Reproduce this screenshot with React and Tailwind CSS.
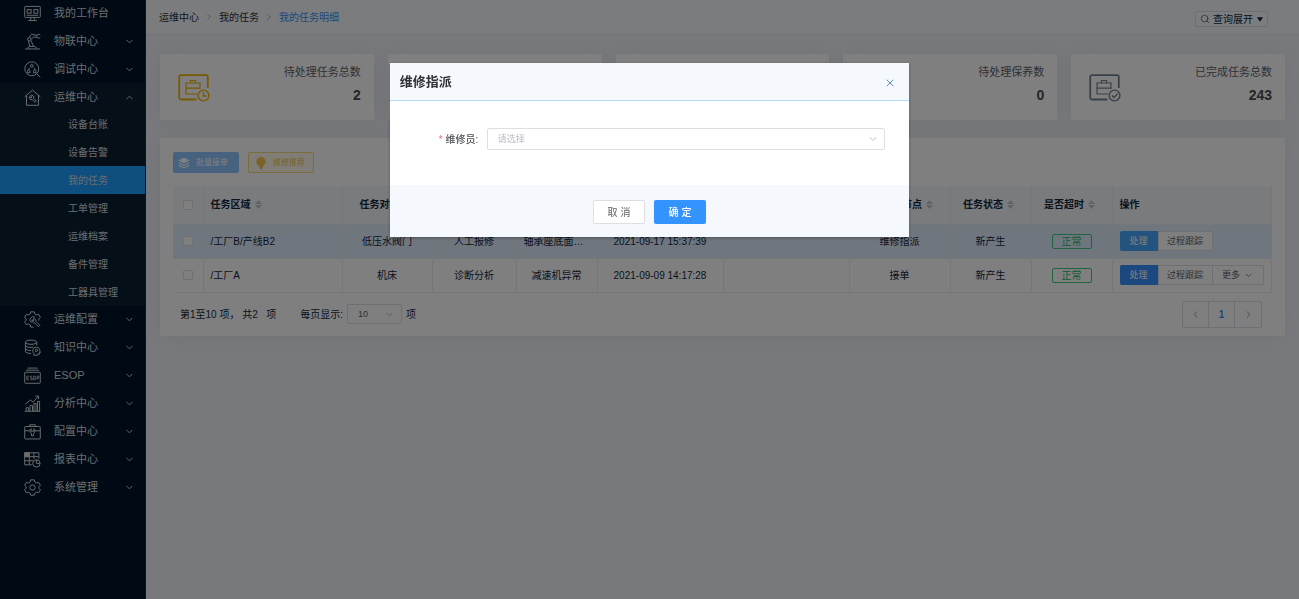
import { ChevronDown, ChevronLeft, ChevronRight, ChevronUp, Search, X } from 'lucide-react';

// 侧边栏图标，统一 24x24 线框
const ICONS = {
  desk: (
    <>
      <rect x="1" y="2" width="22" height="15.5" rx="1" />
      <rect x="4.5" y="6.5" width="5.5" height="5" />
      <rect x="14" y="6.5" width="5.5" height="5" />
      <path d="M4 14.5h16M9.5 17.5v4M14.5 17.5v4M6 22h12" />
    </>
  ),
  robot: (
    <>
      <path d="M1.500 22.500h21M5.500 22c0-2 1-3 3-3h6c2 0 3 1 3 3M8 19 6.500 11M13.500 19 9.800 10.500" />
      <circle cx="7.500" cy="8.800" r="2.300" />
      <path d="M6.500 6.600 11 1.800 18 3.200M10 9.200l3.500-3.700 4.500.8" />
      <path d="M23 2.500c-2-1.500-5-.5-5 2s3 3.500 5 2" />
    </>
  ),
  debug: (
    <>
      <circle cx="11" cy="11" r="9.800" />
      <path d="m18 18 5 5" />
      <circle cx="11" cy="6.800" r="1.900" />
      <path d="M8 9.500 6 13M14 9.500l2 3.500M5 16.500v-2a1.800 1.800 0 0 1 3.600 0v2zM13.400 16.500v-2a1.800 1.800 0 0 1 3.600 0v2z" />
    </>
  ),
  house: (
    <>
      <path d="M1 11 12 1.500 23 11M3.500 9v14h17V9" />
      <path d="M9.200 9.200a3 3 0 0 1 4.300 3.800l4 4-1.800 1.800-4-4a3 3 0 0 1-3.900-4.100l2.200 1.800 1.200-1.300z" />
    </>
  ),
  gearTool: (
    <>
      <path d="M13.500 22.800h-4l-.8-3-2.400-1.400-3 .9L.9 15.200 3 13v-2L.9 8.900l2.400-4.200 3 .9 2.400-1.400.8-3h5l.8 3 2.400 1.400 3-.9 2.400 4.200L21 11v2.500" />
      <path d="M15.500 8.800A4.500 4.500 0 1 0 10.500 16.300" />
      <path d="M13 11a2.800 2.800 0 0 1 3.600 3.400l5.800 5.800-2 2-5.800-5.800a2.800 2.800 0 0 1-3.300-3.600l2.100 1.200z" />
    </>
  ),
  database: (
    <>
      <ellipse cx="10" cy="4.500" rx="8" ry="3" />
      <path d="M2 4.500v13c0 1.700 3.500 3 8 3M18 4.500V9M2 9c0 1.700 3.500 3 8 3 1.500 0 2.500 0 3.500-.4M2 13.300c0 1.700 3.500 3 8 3" />
      <path d="M14 23v-2.500c-3-3-2-9 3.500-9 3.500 0 5 2.200 4.700 5l1 2.500h-1.500v2.500H19V23z" />
      <circle cx="17.500" cy="16" r="1.700" />
    </>
  ),
  esop: (
    <>
      <path d="M5 1.500h14M3 4.500h18" />
      <rect x="1" y="7.500" width="22" height="15.500" rx="1" />
      <path d="M7 13H4v5h3M4 15.500h2.500M11.500 13H9v2.500h2.500V18H9M13.500 13H16v5h-2.500zM18.500 18v-5H21v2.800h-2.500" strokeWidth="1.100" />
    </>
  ),
  chart: (
    <>
      <path d="M1 23h22M3 23v-5h3.500v5M8.500 23v-8H12v8M14 23V12h3v11M19 23V9h3v14" />
      <path d="m2 13 7-6 4 3 7-8M16 1.500h4.500V6" />
    </>
  ),
  box: (
    <>
      <rect x="1" y="5" width="22" height="17.500" rx="1" />
      <path d="M8 5V2.500h8V5M1 11h7.500M15.500 11H23" />
      <path d="M10.500 18v-3.500a3.800 3.800 0 0 1-.5-6.500v3.500h4V8a3.800 3.800 0 0 1-.5 6.500V18z" />
    </>
  ),
  report: (
    <>
      <path d="M11 19.500H1V2.500h20V11M1 8h20M1 13.700h12M7.500 2.500v17M14 2.500V11" />
      <path d="M1 2.500h6.500V8H1z" fill="currentColor" />
      <circle cx="17.500" cy="17.500" r="5.200" />
      <path d="M17.500 12.500v5h5" />
    </>
  ),
  gear: (
    <>
      <path d="M9.500 1.200h5l.8 3 2.400 1.400 3-.9 2.400 4.200L21 11v2l2.100 2.200-2.400 4.200-3-.9-2.400 1.400-.8 3h-5l-.8-3-2.400-1.400-3 .9L.9 15.200 3 13v-2L.9 8.900l2.400-4.200 3 .9 2.400-1.400z" />
      <circle cx="12" cy="12" r="3.800" />
    </>
  ),
};

const MENU = [
  { label: '我的工作台', icon: 'desk', leaf: true },
  { label: '物联中心', icon: 'robot' },
  { label: '调试中心', icon: 'debug' },
  {
    label: '运维中心',
    icon: 'house',
    children: ['设备台账', '设备告警', '我的任务', '工单管理', '运维档案', '备件管理', '工器具管理'],
  },
  { label: '运维配置', icon: 'gearTool' },
  { label: '知识中心', icon: 'database' },
  { label: 'ESOP', icon: 'esop' },
  { label: '分析中心', icon: 'chart' },
  { label: '配置中心', icon: 'box' },
  { label: '报表中心', icon: 'report' },
  { label: '系统管理', icon: 'gear' },
];

const ACTIVE_MENU = '我的任务';

const STATS = [
  { label: '待处理任务总数', value: 2, color: 'text-[#f0b400]', done: false },
  { label: '待处理维修数', value: 2, color: 'text-[#409eff]', done: false },
  { label: '待处理巡检数', value: 0, color: 'text-[#13ce66]', done: false },
  { label: '待处理保养数', value: 0, color: 'text-[#f56c6c]', done: false },
  { label: '已完成任务总数', value: 243, color: 'text-[#708396]', done: true },
];

const COLUMNS = [
  { label: '任务对象', width: 'w-[90px]' },
  { label: '任务来源', width: 'w-[84px]' },
  { label: '任务描述', width: 'w-[81px]' },
  { label: '创建时间', width: 'w-[126px]' },
  { label: '完成时间', width: 'w-[126px]' },
  { label: '任务当前节点', width: 'w-[101px]' },
  { label: '任务状态', width: 'w-[81px]' },
  { label: '是否超时', width: 'w-[81px]' },
];

const ROWS = [
  {
    area: '/工厂B/产线B2',
    cells: ['低压水阀门', '人工报修', '轴承座底面磨损', '2021-09-17 15:37:39', '', '维修指派', '新产生'],
    hover: true,
    more: false,
  },
  {
    area: '/工厂A',
    cells: ['机床', '诊断分析', '减速机异常', '2021-09-09 14:17:28', '', '接单', '新产生'],
    hover: false,
    more: true,
  },
];

function MenuIcon({ name }) {
  return (
    <svg viewBox="0 0 24 24" className="size-[17px] shrink-0" fill="none" stroke="currentColor" strokeWidth="1.4" aria-hidden="true">
      {ICONS[name]}
    </svg>
  );
}

function SortIcon() {
  return (
    <svg viewBox="0 0 8 10" className="h-[9px] w-[7px] shrink-0 text-[#c0c4cc]" fill="currentColor" aria-hidden="true">
      <path d="M4 0 8 4.300H0zM4 10 0 5.700h8z" />
    </svg>
  );
}

function StatIcon({ done, color }) {
  return (
    <svg viewBox="0 0 32 28" className={`h-7 w-8 shrink-0 ${color}`} fill="none" stroke="currentColor" aria-hidden="true">
      <path d="M18.500 25.500H3A1.800 1.800 0 0 1 1.200 23.700V3A1.800 1.800 0 0 1 3 1.200h25A1.800 1.800 0 0 1 29.800 3v11" strokeWidth="1.800" />
      <path d="M19 20H8V9h14v6M8 14.200h14M12.500 9V6.500h5V9" strokeWidth="1.200" />
      <circle cx="25.500" cy="21.500" r="5.400" strokeWidth="1.400" />
      {done ? <path d="m23 21.500 2 2 3.500-3.800" strokeWidth="1.400" /> : <path d="M25.500 18v4h3" strokeWidth="1.400" />}
    </svg>
  );
}

function Sidebar() {
  return (
    <aside className="w-[146px] shrink-0 border-r border-[#16293b] bg-[#001529] text-[#d5d9dd]">
      <nav className="-mt-px">
        {MENU.map(({ label, icon, leaf, children }) => (
          <div key={label} className={children ? 'bg-[#0a1f31]' : ''}>
            <button type="button" className="flex h-7 w-full items-center pr-[10px] pl-6 text-[11px]">
              <MenuIcon name={icon} />
              <span className="ml-[13px] flex-1 text-left">{label}</span>
              {!leaf && (children ? <ChevronUp className="size-[11px]" /> : <ChevronDown className="size-[11px]" />)}
            </button>
            {children && (
              <ul className="-my-px">
                {children.map((child) => (
                  <li key={child}>
                    <a
                      href="#"
                      className={`flex h-7 items-center pl-[68px] text-[10px] ${child === ACTIVE_MENU ? 'bg-[#1f9fff]' : ''}`}
                    >
                      {child}
                    </a>
                  </li>
                ))}
              </ul>
            )}
          </div>
        ))}
      </nav>
    </aside>
  );
}

function TopBar() {
  return (
    <header className="flex h-[35px] items-center justify-between border-b border-[#e6e9ee] bg-[#f6f8fb] pr-[31px] pl-[13px]">
      <nav className="flex items-center gap-[5px] text-[10px] text-[#303133]">
        <a href="#">运维中心</a>
        <ChevronRight className="size-[10px] text-[#a0a4aa]" />
        <a href="#">我的任务</a>
        <ChevronRight className="size-[10px] text-[#a0a4aa]" />
        <a href="#" className="text-[#3490ff]">我的任务明细</a>
      </nav>
      <button type="button" className="mt-1 flex h-4 items-center gap-[3px] rounded-xs border border-[#dcdfe6] bg-white/40 px-1 text-[10px] text-[#12263c]">
        <Search className="size-[10px] text-[#606266]" />
        查询展开
        <svg viewBox="0 0 8 6" className="ml-px h-[5px] w-[6px]" fill="currentColor" aria-hidden="true">
          <path d="M0 0h8L4 6z" />
        </svg>
      </button>
    </header>
  );
}

function StatCard({ label, value, color, done }) {
  return (
    <div className="flex h-[66px] flex-1 items-start justify-between bg-white pt-2 pr-[13px] pl-[18px] shadow-[0_0_20px_rgba(120,135,160,0.12)]">
      <div className="pt-3">
        <StatIcon done={done} color={color} />
      </div>
      <div className="text-right text-[#606266]">
        <p className="text-[11px] leading-5">{label}</p>
        <p className="mt-[3px] text-[14px] leading-5 font-bold text-[#4c4d50]">{value}</p>
      </div>
    </div>
  );
}

function Toolbar() {
  return (
    <div className="flex gap-[9px] text-[8px]">
      <button type="button" disabled className="flex h-[21px] w-[66px] items-center gap-[6px] rounded-xs bg-[#8cc5ff] pl-[5px] text-white">
        <svg viewBox="0 0 24 24" className="size-3" aria-hidden="true">
          <path d="m12 1 11 6-11 6L1 7z" fill="currentColor" />
          <path d="m1.500 12 10.500 5.500L22.500 12M1.500 16.500 12 22l10.500-5.500" fill="none" stroke="currentColor" strokeWidth="2.200" />
        </svg>
        批量接单
      </button>
      <button type="button" disabled className="flex h-[21px] w-[66px] items-center gap-[6px] rounded-xs border border-[#f7d878] bg-[#fffaec] pl-[6px] text-[#f0c850]">
        <svg viewBox="0 0 24 24" className="size-3" fill="currentColor" aria-hidden="true">
          <path d="M12 0a9.500 9.500 0 0 0-9.500 9.500c0 4 3 6.500 5.500 9h8c2.500-2.500 5.500-5 5.500-9A9.500 9.500 0 0 0 12 0zM8.500 18.500h7L14 24h-4z" />
        </svg>
        维修推荐
      </button>
    </div>
  );
}

function RowActions({ hover, more }) {
  return (
    <div className="flex h-5 text-[9px] text-[#606266]">
      <button type="button" className={`w-[38px] rounded-l-xs pt-px text-white ${hover ? 'bg-[#46a6ff]' : 'bg-[#3490ff]'}`}>
        处理
      </button>
      <button type="button" className="w-[55px] border border-[#dcdfe6] bg-white pt-px">过程跟踪</button>
      {more && (
        <button type="button" className="flex w-[51px] items-center justify-center gap-1 rounded-r-xs border border-l-0 border-[#dcdfe6] bg-white pt-px">
          更多
          <ChevronDown className="size-[9px]" />
        </button>
      )}
    </div>
  );
}

function TaskTable() {
  return (
    <table className="mt-[13px] w-full table-fixed border-collapse text-[10px] text-[#12263c]">
      <thead>
        <tr className="h-[38px] bg-[#f5f7fa]">
          <th className="w-[30px] border-r border-b border-[#ebeef5]">
            <input type="checkbox" aria-label="全选" className="mx-auto block size-[10px] appearance-none rounded-xs border border-[#dcdfe6] bg-white" />
          </th>
          <th className="w-[139px] border-r border-b border-[#ebeef5] px-[7px]">
            <span className="flex items-center gap-1">
              任务区域
              <SortIcon />
            </span>
          </th>
          {COLUMNS.map(({ label, width }) => (
            <th key={label} className={`${width} border-r border-b border-[#ebeef5] pr-1`}>
              <span className="flex items-center justify-center gap-1 whitespace-nowrap">
                {label}
                <SortIcon />
              </span>
            </th>
          ))}
          <th className="border-r border-b border-[#ebeef5] px-[7px] text-left">操作</th>
        </tr>
      </thead>
      <tbody>
        {ROWS.map(({ area, cells, hover, more }) => (
          <tr key={area} className={`h-[34px] text-center ${hover ? 'bg-[#dfecfd]' : ''}`}>
            <td className="border-r border-b border-[#ebeef5]">
              <input type="checkbox" aria-label={area} className="mx-auto block size-[10px] appearance-none rounded-xs border border-[#dcdfe6] bg-white" />
            </td>
            <td className="border-r border-b border-[#ebeef5] px-[7px] text-left">{area}</td>
            {cells.map((cell, i) => (
              <td key={i} className="truncate border-r border-b border-[#ebeef5] px-[7px]">{cell}</td>
            ))}
            <td className="border-r border-b border-[#ebeef5]">
              <span className="mx-auto flex h-[15px] w-10 items-center justify-center rounded-xs border border-[#3fc77f] text-[#27b96b]">
                正常
              </span>
            </td>
            <td className="border-r border-b border-[#ebeef5] px-[7px]">
              <RowActions hover={hover} more={more} />
            </td>
          </tr>
        ))}
      </tbody>
    </table>
  );
}

function Pagination() {
  return (
    <div className="mt-2 flex items-center justify-between pr-[10px] pl-[7px] text-[10px] text-[#12263c]">
      <div className="flex items-center">
        <span>第1至10 项， 共2&nbsp;&nbsp; 项</span>
        <label htmlFor="page-size" className="ml-6">每页显示:</label>
        <span className="relative mx-1 flex items-center">
          <select id="page-size" className="h-5 w-[55px] appearance-none rounded-xs border border-[#dcdfe6] bg-white pt-0.5 pl-[10px] text-[9px] text-[#606266]">
            <option>10</option>
          </select>
          <ChevronDown className="pointer-events-none absolute right-[7px] size-[11px] text-[#b4b8bf]" />
        </span>
        <span>项</span>
      </div>
      <div className="flex h-[27px] divide-x divide-[#dcdfe6] rounded-xs border border-[#dcdfe6]">
        <button type="button" aria-label="上一页" className="flex w-[26px] items-center justify-center text-[#909399]">
          <ChevronLeft className="size-[11px]" />
        </button>
        <button type="button" className="w-[26px] font-bold text-[#3490ff]">1</button>
        <button type="button" aria-label="下一页" className="flex w-[26px] items-center justify-center text-[#909399]">
          <ChevronRight className="size-[11px]" />
        </button>
      </div>
    </div>
  );
}

function AssignDialog() {
  return (
    <div className="fixed inset-0 flex items-start justify-center bg-black/50 pt-[63px]">
      <div role="dialog" aria-modal="true" aria-labelledby="assign-title" className="w-2/5 bg-white shadow-[0_1px_3px_rgba(0,0,0,0.3)]">
        <div className="flex h-[38px] items-center justify-between border-b border-[#b3dcfb] bg-[#f5f8fd] pr-[13px] pl-[10px]">
          <h2 id="assign-title" className="text-[13px] font-bold text-[#303133]">维修指派</h2>
          <button type="button" aria-label="关闭" className="pt-0.5 text-[#5b93b8]">
            <X className="size-3" />
          </button>
        </div>
        <div className="flex items-center pt-[27px] pr-6 pb-[35px] pl-[49px]">
          <label htmlFor="worker" className="w-12 text-[10px] font-medium text-[#505256]">
            <span className="text-[#f56c6c]">*</span> 维修员:
          </label>
          <div className="relative flex flex-1 items-center">
            <select id="worker" className="h-[22px] w-full appearance-none rounded-xs border border-[#dcdfe6] bg-white pt-0.5 pl-[10px] text-[9px] text-[#b8bcc4]">
              <option>请选择</option>
            </select>
            <ChevronDown className="pointer-events-none absolute right-[6px] size-3 text-[#c0c4cc]" />
          </div>
        </div>
        <div className="flex h-[52px] items-center justify-center gap-[9px] bg-[#f5f8fd] pt-0.5 text-[10px]">
          <button type="button" className="h-6 w-[52px] rounded-xs border border-[#dcdfe6] bg-white text-[#606266]">取 消</button>
          <button type="button" className="h-6 w-[52px] rounded-xs bg-[#3494ff] font-medium text-white">确 定</button>
        </div>
      </div>
    </div>
  );
}

export default function App() {
  return (
    <div className="flex min-h-screen bg-[#f0f3f8] font-['Liberation_Sans','Noto_Sans_CJK_SC',sans-serif]">
      <Sidebar />
      <div className="min-w-0 flex-1">
        <TopBar />
        <main className="px-[14px] pt-[19px]">
          <section className="flex gap-[14px]">
            {STATS.map((stat) => (
              <StatCard key={stat.label} {...stat} />
            ))}
          </section>
          <section className="mt-[18px] bg-white px-[13px] pt-[14px] pb-2 shadow-[0_0_20px_rgba(120,135,160,0.12)]">
            <Toolbar />
            <TaskTable />
            <Pagination />
          </section>
        </main>
      </div>
      <AssignDialog />
    </div>
  );
}
